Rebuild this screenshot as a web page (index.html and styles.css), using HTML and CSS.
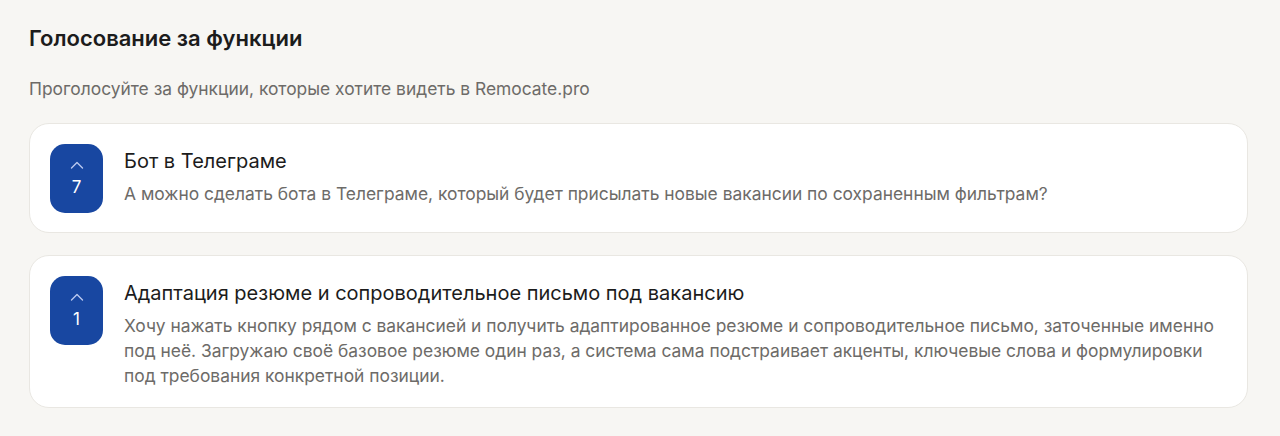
FILE: index.html
```html
<!DOCTYPE html>
<html lang="ru">
<head>
<meta charset="utf-8">
<link rel="stylesheet" href="styles.css">
</head>
<body>
<main class="page">
  <h1 class="title">Голосование за функции</h1>
  <p class="subtitle">Проголосуйте за функции, которые хотите видеть в Remocate.pro</p>
  <div class="list">
    <div class="card">
      <button class="vote">
        <svg class="chev" width="14" height="8" viewBox="0 0 14 8"><path d="M1.5 7 L7 1.5 L12.5 7" fill="none" stroke="#b9c9ee" stroke-width="1.4" stroke-linecap="round" stroke-linejoin="round"/></svg>
        <span class="count">7</span>
      </button>
      <div class="body">
        <div class="name">Бот в Телеграме</div>
        <div class="desc">А можно сделать бота в Телеграме, который будет присылать новые вакансии по сохраненным фильтрам?</div>
      </div>
    </div>
    <div class="card">
      <button class="vote">
        <svg class="chev" width="14" height="8" viewBox="0 0 14 8"><path d="M1.5 7 L7 1.5 L12.5 7" fill="none" stroke="#b9c9ee" stroke-width="1.4" stroke-linecap="round" stroke-linejoin="round"/></svg>
        <span class="count">1</span>
      </button>
      <div class="body">
        <div class="name">Адаптация резюме и сопроводительное письмо под вакансию</div>
        <div class="desc">Хочу нажать кнопку рядом с вакансией и получить адаптированное резюме и сопроводительное письмо, заточенные именно под неё. Загружаю своё базовое резюме один раз, а система сама подстраивает акценты, ключевые слова и формулировки под требования конкретной позиции.</div>
      </div>
    </div>
  </div>
</main>
</body>
</html>
```
FILE: styles.css
```css
* { box-sizing: border-box; }
html, body { margin: 0; padding: 0; }
body {
  background: #f7f6f3;
  font-family: Inter, "Noto Sans", sans-serif;
  color: #1f1f1f;
}
.page {
  padding: 24px 32px 0 29px;
}
.title {
  margin: 0;
  font-size: 22px;
  line-height: 28px;
  font-weight: 600;
  color: #1c1c1c;
}
.subtitle {
  margin: 26px 0 0;
  font-size: 17.4px;
  line-height: 22px;
  color: #6d6b68;
}
.list {
  margin-top: 23px;
  display: flex;
  flex-direction: column;
  gap: 22px;
}
.card {
  display: flex;
  align-items: flex-start;
  gap: 21px;
  background: #ffffff;
  border: 1px solid #e9e7e2;
  border-radius: 20px;
  padding: 20px 20px 19px;
}
.vote {
  flex: none;
  width: 53px;
  height: 69px;
  border: none;
  border-radius: 15px;
  background: #1847a1;
  display: flex;
  flex-direction: column;
  align-items: center;
  justify-content: center;
  gap: 9px;
  padding: 0 0 1px;
  font-family: inherit;
}
.chev { display: block; }
.count {
  color: #ffffff;
  font-size: 17px;
  line-height: 18px;
  font-weight: 400;
}
.body {
  padding-top: 3px;
  flex: 1;
  min-width: 0;
}
.name {
  font-size: 20px;
  line-height: 28px;
  font-weight: 400;
  color: #1c1c1c;
}
.desc {
  margin-top: 6px;
  font-size: 17.4px;
  line-height: 25px;
  color: #6d6b68;
}
```
